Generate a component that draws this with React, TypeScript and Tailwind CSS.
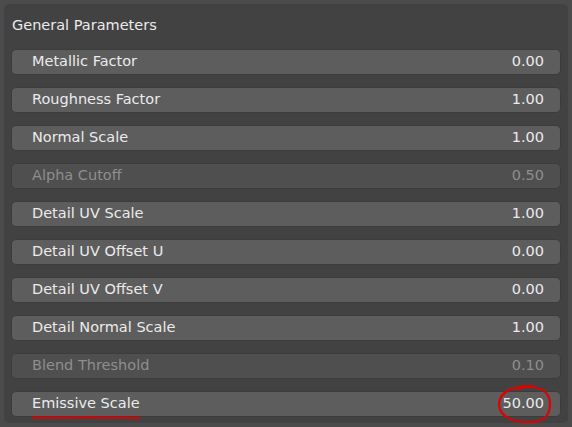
import React from 'react';

type Param = { label: string; value: string; disabled?: boolean };

const params: Param[] = [
  { label: 'Metallic Factor', value: '0.00' },
  { label: 'Roughness Factor', value: '1.00' },
  { label: 'Normal Scale', value: '1.00' },
  { label: 'Alpha Cutoff', value: '0.50', disabled: true },
  { label: 'Detail UV Scale', value: '1.00' },
  { label: 'Detail UV Offset U', value: '0.00' },
  { label: 'Detail UV Offset V', value: '0.00' },
  { label: 'Detail Normal Scale', value: '1.00' },
  { label: 'Blend Threshold', value: '0.10', disabled: true },
  { label: 'Emissive Scale', value: '50.00' },
];

const Field: React.FC<{ p: Param; marked?: boolean }> = ({ p, marked }) => (
  <div
    className={`relative h-[26px] rounded-[5px] border border-[#3c3c3c] flex items-center justify-between pl-[20px] pr-[16px] text-[14.5px] ${
      p.disabled ? 'bg-[#4f4f4f] text-[#8e8e8e]' : 'bg-[#5d5d5d] text-[#ebebeb]'
    }`}
  >
    <span>{p.label}</span>
    <span>{p.value}</span>
    {marked && (
      <svg className="absolute left-0 top-0 pointer-events-none overflow-visible" width="548" height="26">
        {/* underline under label */}
        <path d="M20 25.5 C 50 26, 90 25, 128 26" stroke="#e00000" strokeWidth="2" fill="none" />
        {/* circle around value */}
        <path
          d="M520 -6 C 505 -6, 487 -2, 487 12 C 487 26, 504 31, 520 30 C 534 29, 538 22, 538 12 C 538 1, 530 -5, 516 -5 C 510 -5, 506 -3, 506 -2"
          stroke="#e00000"
          strokeWidth="2.2"
          fill="none"
          strokeLinecap="round"
        />
      </svg>
    )}
  </div>
);

export default function App() {
  return (
    <div
      className="w-[572px] h-[427px] bg-[#4b4b4b] p-[4px]"
      style={{ fontFamily: '"DejaVu Sans", sans-serif' }}
    >
      <div className="h-[419px] rounded-[5px] bg-[#424242] pl-[7px] pr-[7px] pt-[9px]">
        <div className="text-[14.5px] text-[#ebebeb] pl-[1px] h-[24px] leading-[24px] mb-[12px]">General Parameters</div>
        <div className="flex flex-col gap-[12px]">
          {params.map((p, i) => (
            <Field key={p.label} p={p} marked={i === params.length - 1} />
          ))}
        </div>
      </div>
    </div>
  );
}
